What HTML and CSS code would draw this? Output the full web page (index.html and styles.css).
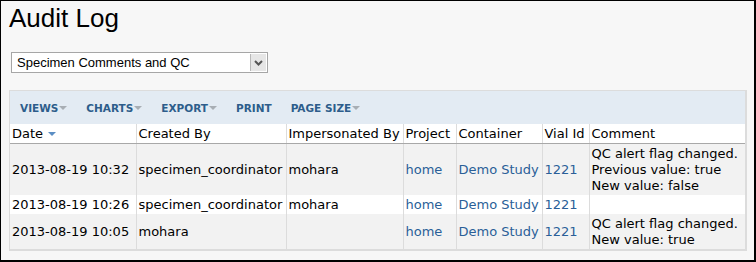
FILE: index.html
```html
<!DOCTYPE html>
<html lang="en">
<head>
    <meta charset="UTF-8">
    <title>Audit Log</title>
    <link rel="stylesheet" href="styles.css">
</head>
<body>
    <div class="frame">
        <h1>Audit Log</h1>

        <div class="picker">
            <span class="picker-text">Specimen Comments and QC</span>
            <span class="picker-btn">
                <svg width="9" height="6" viewBox="0 0 9 6"><path d="M1 1 L4.5 4.5 L8 1" fill="none" stroke="#555" stroke-width="2"/></svg>
            </span>
        </div>

        <div class="grid">
            <!-- toolbar -->
            <div class="toolbar">
                <span class="tb-btn">VIEWS<i class="caret"></i></span>
                <span class="tb-btn">CHARTS<i class="caret"></i></span>
                <span class="tb-btn">EXPORT<i class="caret"></i></span>
                <span class="tb-btn">PRINT</span>
                <span class="tb-btn">PAGE SIZE<i class="caret"></i></span>
            </div>

            <table class="log">
                <colgroup>
                    <col style="width:126px">
                    <col style="width:150px">
                    <col style="width:117px">
                    <col style="width:53px">
                    <col style="width:86px">
                    <col style="width:47px">
                    <col>
                </colgroup>
                <thead>
                    <tr>
                        <th>Date <i class="sort"></i></th>
                        <th>Created By</th>
                        <th>Impersonated By</th>
                        <th>Project</th>
                        <th>Container</th>
                        <th>Vial Id</th>
                        <th>Comment</th>
                    </tr>
                </thead>
                <tbody>
                    <tr class="alt">
                        <td>2013-08-19 10:32</td>
                        <td>specimen_coordinator</td>
                        <td>mohara</td>
                        <td><a href="#">home</a></td>
                        <td><a href="#">Demo Study</a></td>
                        <td><a href="#">1221</a></td>
                        <td>QC alert flag changed.<br>Previous value: true<br>New value: false</td>
                    </tr>
                    <tr>
                        <td>2013-08-19 10:26</td>
                        <td>specimen_coordinator</td>
                        <td>mohara</td>
                        <td><a href="#">home</a></td>
                        <td><a href="#">Demo Study</a></td>
                        <td><a href="#">1221</a></td>
                        <td></td>
                    </tr>
                    <tr class="alt">
                        <td>2013-08-19 10:05</td>
                        <td>mohara</td>
                        <td></td>
                        <td><a href="#">home</a></td>
                        <td><a href="#">Demo Study</a></td>
                        <td><a href="#">1221</a></td>
                        <td>QC alert flag changed.<br>New value: true</td>
                    </tr>
                </tbody>
            </table>
        </div>
    </div>
</body>
</html>
```

FILE: styles.css
```css
html, body { margin: 0; background: #f7f7f7; }
.frame { box-sizing: border-box; height: 262px; border-style: solid; border-color: #000; border-width: 1px 2px 2px 1px; padding: 0 7px 0 8px; font-family: "DejaVu Sans", Verdana, sans-serif; }
h1 { margin: 2px 0 0; font: normal 26px/30px "Liberation Sans", Arial, sans-serif; color: #000; }

.picker { display: flex; width: 255px; height: 19px; margin: 19px 0 0 2px; border: 1px solid #a6a6a6; background: #fff; }
.picker-text { flex: 1; padding-left: 5px; font: 13px/19px "Liberation Sans", Arial, sans-serif; color: #000; }
.picker-btn { display: flex; align-items: center; justify-content: center; width: 15px; margin: 1px; background: #e6e6e6; border-left: 1px solid #b8b8b8; }

.grid { margin-top: 17px; border: solid #dcdcdc; border-width: 1px 2px 2px 1px; }
.toolbar { display: flex; gap: 19px; height: 33px; align-items: center; padding-left: 10px; background: #e3ebf3; }
.tb-btn { font-weight: bold; font-size: 10.5px; color: #2d5d8b; white-space: nowrap; }
.caret { display: inline-block; width: 0; height: 0; margin-left: 1px; vertical-align: 2px; border-left: 4px solid transparent; border-right: 4px solid transparent; border-top: 4px solid #a8aeb4; }

.log { width: 100%; table-layout: fixed; border-collapse: collapse; font-size: 13px; line-height: 16px; color: #000; }
.log th, .log td { padding: 2px 2px 1px; text-align: left; vertical-align: middle; border-left: 1px solid #dcdcdc; white-space: nowrap; overflow: hidden; }
.log th:first-child, .log td:first-child { border-left: none; }
.log th { font-weight: normal; background: #fff; border-bottom: 1px solid #a8a8a8; height: 16px; }
.log td { background: #fff; }
.log tr.alt td { background: #f2f2f2; }
.log a { color: #2a5f98; text-decoration: none; }
.sort { display: inline-block; width: 0; height: 0; margin-left: 1px; vertical-align: 2px; border-left: 4px solid transparent; border-right: 4px solid transparent; border-top: 4px solid #5b8ec4; }
```
